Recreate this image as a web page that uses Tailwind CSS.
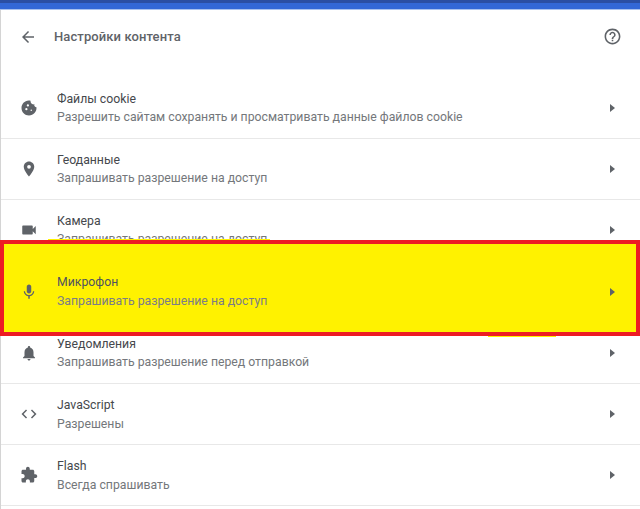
<!DOCTYPE html>
<html lang="ru">
<head>
    <meta charset="UTF-8" />
    <title>Настройки контента</title>
    <script src="https://cdn.jsdelivr.net/npm/@tailwindcss/browser@4"></script>
</head>
<body class="bg-white overflow-hidden font-['Roboto',sans-serif]">
<div class="relative w-[640px] h-[509px] overflow-hidden">
    <div class="h-[3px] bg-[#2b4ea3]"></div>
    <div class="h-[7px] bg-[#3367d6] border-b border-[#a9c0ee]"></div>

    <div class="border-l border-[#d4d4d4] h-[499px]">
        <div class="h-[53px] flex items-center pl-[18px] pr-[18px]">
            <svg class="w-[18px] h-[18px] fill-[#5f6368]" viewBox="0 0 24 24"><path d="M20 11H7.830l5.590-5.590L12 4l-8 8 8 8 1.410-1.410L7.830 13H20v-2z"/></svg>
            <h1 class="ml-[17px] text-[13px] font-medium tracking-[0.1px] text-[#5f6368]">Настройки контента</h1>
            <svg class="ml-auto w-[19px] h-[19px] fill-[#5f6368]" viewBox="0 0 24 24"><path d="M11 18h2v-2h-2v2zm1-16C6.480 2 2 6.480 2 12s4.480 10 10 10 10-4.480 10-10S17.520 2 12 2zm0 18c-4.410 0-8-3.590-8-8s3.590-8 8-8 8 3.590 8 8-3.590 8-8 8zm0-14c-2.210 0-4 1.790-4 4h2c0-1.100.9-2 2-2s2 .9 2 2c0 2-3 1.750-3 5h2c0-2.250 3-2.500 3-5 0-2.210-1.790-4-4-4z"/></svg>
        </div>

        <div class="mt-[15px]">
            <div class="h-[61px] flex items-center pl-[19px] pr-[25px] border-b border-[#e8e8e8]">
                <svg class="w-[18px] h-[18px] fill-[#5f6368] shrink-0" viewBox="0 0 24 24"><path fill-rule="evenodd" d="M21.950 10.990c-1.790-.03-3.700-1.950-2.680-4.040-2.970 1-5.780-1.590-5.190-4.560C7.110.740 2 6.410 2 12c0 5.520 4.480 10 10 10 5.890 0 10.540-5.080 9.950-11.010zM8.500 15a1.500 1.500 0 1 1 0-3 1.500 1.500 0 0 1 0 3zm2-5a1.500 1.500 0 1 1 0-3 1.500 1.500 0 0 1 0 3zm4.500 6a1 1 0 1 1 0-2 1 1 0 0 1 0 2z"/></svg>
                <div class="ml-[19px] mt-[2px] text-[12.25px]">
                    <div class="leading-[17px] text-[#45484c]">Файлы cookie</div>
                    <div class="leading-[19px] text-[#74777b]">Разрешить сайтам сохранять и просматривать данные файлов cookie</div>
                </div>
                <svg class="ml-auto w-[5px] h-[8px] fill-[#5f6368]" viewBox="0 0 5 8"><path d="M0 0l5 4-5 4z"/></svg>
            </div>

            <div class="h-[61px] flex items-center pl-[19px] pr-[25px] border-b border-[#e8e8e8]">
                <svg class="w-[18px] h-[18px] fill-[#5f6368] shrink-0" viewBox="0 0 24 24"><path d="M12 2C8.130 2 5 5.130 5 9c0 5.250 7 13 7 13s7-7.750 7-13c0-3.870-3.130-7-7-7zm0 9.500a2.500 2.500 0 0 1 0-5 2.500 2.500 0 0 1 0 5z"/></svg>
                <div class="ml-[19px] mt-[2px] text-[12.25px]">
                    <div class="leading-[17px] text-[#45484c]">Геоданные</div>
                    <div class="leading-[19px] text-[#74777b]">Запрашивать разрешение на доступ</div>
                </div>
                <svg class="ml-auto w-[5px] h-[8px] fill-[#5f6368]" viewBox="0 0 5 8"><path d="M0 0l5 4-5 4z"/></svg>
            </div>

            <div class="h-[61px] flex items-center pl-[19px] pr-[25px] border-b border-[#e8e8e8]">
                <svg class="w-[18px] h-[18px] fill-[#5f6368] shrink-0" viewBox="0 0 24 24"><path d="M17 10.500V7c0-.55-.45-1-1-1H4c-.55 0-1 .45-1 1v10c0 .55.45 1 1 1h12c.55 0 1-.45 1-1v-3.500l4 4v-11l-4 4z"/></svg>
                <div class="ml-[19px] mt-[2px] text-[12.25px]">
                    <div class="leading-[17px] text-[#45484c]">Камера</div>
                    <div class="leading-[19px] text-[#74777b]">Запрашивать разрешение на доступ</div>
                </div>
                <svg class="ml-auto w-[5px] h-[8px] fill-[#5f6368]" viewBox="0 0 5 8"><path d="M0 0l5 4-5 4z"/></svg>
            </div>

            <div class="relative z-20 h-[61px] flex items-center pl-[19px] pr-[25px]">
                <svg class="w-[18px] h-[18px] fill-[#5f6368] shrink-0" viewBox="0 0 24 24"><path d="M12 14c1.660 0 3-1.340 3-3V5c0-1.660-1.340-3-3-3S9 3.340 9 5v6c0 1.660 1.340 3 3 3zm5.300-3c0 3-2.540 5.100-5.300 5.100S6.700 14 6.700 11H5c0 3.410 2.720 6.230 6 6.720V21h2v-3.280c3.280-.48 6-3.300 6-6.720h-1.700z"/></svg>
                <div class="ml-[19px] text-[12.25px]">
                    <div class="leading-[19px] text-[#4f5260]">Микрофон</div>
                    <div class="leading-[19px] text-[#7b7d88]">Запрашивать разрешение на доступ</div>
                </div>
                <svg class="ml-auto w-[5px] h-[8px] fill-[#5f6368]" viewBox="0 0 5 8"><path d="M0 0l5 4-5 4z"/></svg>
            </div>

            <div class="h-[62px] flex items-center pl-[19px] pr-[25px] border-b border-[#e8e8e8]">
                <svg class="w-[18px] h-[18px] fill-[#5f6368] shrink-0" viewBox="0 0 24 24"><path d="M12 22c1.100 0 2-.9 2-2h-4c0 1.100.9 2 2 2zm6-6v-5c0-3.070-1.630-5.640-4.500-6.320V4c0-.83-.67-1.500-1.500-1.500s-1.500.67-1.500 1.500v.68C7.640 5.360 6 7.920 6 11v5l-2 2v1h16v-1l-2-2z"/></svg>
                <div class="ml-[19px] mt-[2px] text-[12.25px]">
                    <div class="leading-[17px] text-[#45484c]">Уведомления</div>
                    <div class="leading-[19px] text-[#74777b]">Запрашивать разрешение перед отправкой</div>
                </div>
                <svg class="ml-auto w-[5px] h-[8px] fill-[#5f6368]" viewBox="0 0 5 8"><path d="M0 0l5 4-5 4z"/></svg>
            </div>

            <div class="h-[61px] flex items-center pl-[19px] pr-[25px] border-b border-[#e8e8e8]">
                <svg class="w-[18px] h-[18px] fill-[#5f6368] shrink-0" viewBox="0 0 24 24"><path d="M9.400 16.600L4.800 12l4.600-4.600L8 6l-6 6 6 6 1.400-1.400zm5.200 0l4.600-4.600-4.600-4.600L16 6l6 6-6 6-1.400-1.400z"/></svg>
                <div class="ml-[19px] mt-[2px] text-[12.25px]">
                    <div class="leading-[19px] text-[#45484c]">JavaScript</div>
                    <div class="leading-[19px] text-[#74777b]">Разрешены</div>
                </div>
                <svg class="ml-auto w-[5px] h-[8px] fill-[#5f6368]" viewBox="0 0 5 8"><path d="M0 0l5 4-5 4z"/></svg>
            </div>

            <div class="h-[61px] flex items-center pl-[19px] pr-[25px] border-b border-[#e8e8e8]">
                <svg class="w-[18px] h-[18px] fill-[#5f6368] shrink-0" viewBox="0 0 24 24"><path d="M20.500 11H19V7c0-1.100-.9-2-2-2h-4V3.500C13 2.120 11.880 1 10.500 1S8 2.120 8 3.500V5H4c-1.100 0-1.990.9-1.990 2v3.800H3.500c1.490 0 2.700 1.210 2.700 2.700s-1.210 2.700-2.700 2.700H2V20c0 1.100.9 2 2 2h3.800v-1.500c0-1.490 1.210-2.700 2.700-2.700 1.490 0 2.700 1.210 2.700 2.700V22H17c1.100 0 2-.9 2-2v-4h1.500c1.380 0 2.500-1.120 2.500-2.500S21.880 11 20.500 11z"/></svg>
                <div class="ml-[19px] mt-[2px] text-[12.25px]">
                    <div class="leading-[19px] text-[#45484c]">Flash</div>
                    <div class="leading-[19px] text-[#74777b]">Всегда спрашивать</div>
                </div>
                <svg class="ml-auto w-[5px] h-[8px] fill-[#5f6368]" viewBox="0 0 5 8"><path d="M0 0l5 4-5 4z"/></svg>
            </div>
        </div>
    </div>

    <!-- highlight painted over the screenshot -->
    <div class="absolute z-10 left-0 top-[240px] w-[640px] h-[96px] bg-[#fff200] border-[4px] border-[#ed1c24]"></div>
    <div class="absolute z-10 left-[48px] top-[239px] w-[222px] h-px bg-[#fff200]"></div>
    <div class="absolute z-10 left-[488px] top-[336px] w-[68px] h-px bg-[#fff200]"></div>
</div>
</body>
</html>
